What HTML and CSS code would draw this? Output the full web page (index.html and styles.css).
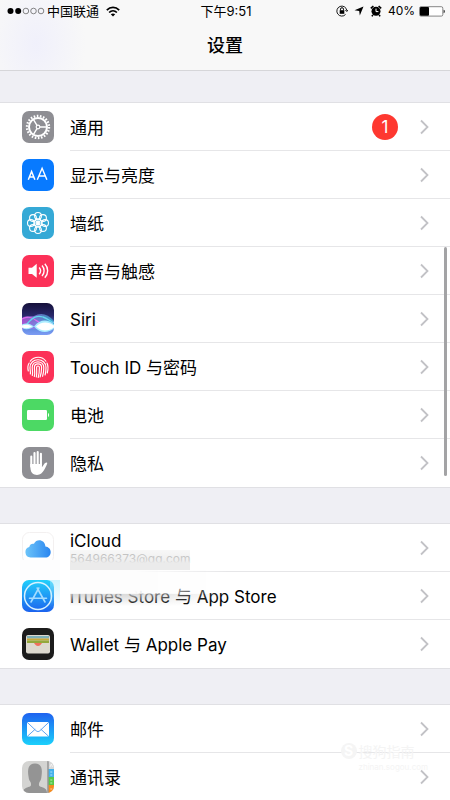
FILE: index.html
```
<!DOCTYPE html>
<html lang="zh-CN">
<head>
<meta charset="utf-8">
<meta name="viewport" content="width=device-width, initial-scale=1">
<title>设置</title>
<link rel="stylesheet" href="styles.css">
</head>
<body>
<svg class="defs" aria-hidden="true">
  <defs>
    <symbol id="chevron" viewBox="0 0 10 16"><path d="M1 1.500 7.500 8 1 14.500" fill="none" stroke="#c2c2c6" stroke-width="1.800"/></symbol>
    <linearGradient id="mailBg" x2="0" y2="1"><stop stop-color="#1f62f0"/><stop offset="1" stop-color="#1bd0fb"/></linearGradient>
    <linearGradient id="storeBg" x2="0" y2="1"><stop stop-color="#22d0fb"/><stop offset="1" stop-color="#1b62ee"/></linearGradient>
    <linearGradient id="cloudBg" x2="1" y2="0"><stop stop-color="#6cc4f9"/><stop offset="1" stop-color="#2a86f0"/></linearGradient>
    <linearGradient id="siriBg" x2="0" y2="1"><stop stop-color="#15103a"/><stop offset=".4" stop-color="#29286b"/><stop offset=".75" stop-color="#5a86dc"/><stop offset="1" stop-color="#7d9cf4"/></linearGradient>
    <linearGradient id="siriWave"><stop stop-color="#d14de0"/><stop offset=".45" stop-color="#8a8bea"/><stop offset="1" stop-color="#36c0dc"/></linearGradient>
    <clipPath id="tile"><rect width="32" height="32" rx="7"/></clipPath>
  </defs>
</svg>

<header class="top">
  <div class="status">
    <div class="carrier">
      <svg width="38" height="8" viewBox="0 0 38 8"><g fill="#000"><circle cx="3.5" cy="4" r="3"/><circle cx="11.2" cy="4" r="3"/></g><g fill="none" stroke="#555" stroke-width=".7"><circle cx="18.9" cy="4" r="2.8"/><circle cx="26.5" cy="4" r="2.8"/><circle cx="34" cy="4" r="2.8"/></g></svg>
      <span>中国联通</span>
      <svg class="wifi" width="14" height="11" viewBox="0 0 14 11"><g fill="none" stroke="#000" stroke-width="1.7"><path d="M.8 4.1C4.400.5 9.600.5 13.200 4.100"/><path d="M3.1 6.500c2.300-2.200 5.500-2.200 7.800 0"/></g><path d="M7 10.500 4.800 8.200c1.300-1.100 3.100-1.100 4.400 0z"/></svg>
    </div>
    <time>下午9:51</time>
    <div class="indicators">
      <svg width="12" height="12" viewBox="0 0 12 12"><path d="M10.800 5.500A5 5 0 1 0 9.600 9.400M9.400 5l1.400 1.500L12 5" fill="none" stroke="#000" stroke-width=".9"/><rect x="3.7" y="5.2" width="4.6" height="3.6"/><path d="M4.500 5.300V4.200a1.500 1.500 0 0 1 3 0v1.100" fill="none" stroke="#000"/></svg>
      <svg width="10" height="10" viewBox="0 0 10 10"><path d="M9.500.5 5.800 9.500 5.200 4.900.5 4.300z"/></svg>
      <svg width="12" height="12" viewBox="0 0 12 12"><circle cx="6" cy="6.3" r="4.5"/><path d="M.8 3.300 3.400 1M8.600 1l2.600 2.300M2.800 9.800 2 11.300M9.200 9.800l.8 1.500" stroke="#000" stroke-width="1.6"/><path d="M6 3.600v3h2.400" stroke="#fff" fill="none"/></svg>
      <span>40%</span>
      <svg width="26" height="11" viewBox="0 0 26 11"><rect x=".5" y=".7" width="23.3" height="9.4" rx="1.5" fill="#fff" stroke="#555" stroke-width=".7"/><rect x="1" y="1" width="9" height="8.8" rx="1"/><path d="M24.700 3.800c1.300.2 1.300 3.200 0 3.400z"/></svg>
    </div>
  </div>
  <h1>设置</h1>
</header>

<main>
  <nav class="group">
    <a class="row" href="#general">
      <svg class="icon" viewBox="0 0 32 32"><rect width="32" height="32" rx="7" fill="#8e8e93"/><g fill="none" stroke="#fff"><circle cx="16" cy="16" r="11" stroke-width="2.400" stroke-dasharray="1.600 1.542"/><circle cx="16" cy="16" r="9" stroke-width="2"/><path d="M18 16h7M15 14.300l-3.800-6.200M15 17.700l-3.800 6.200" stroke-width="1.400"/><circle cx="16" cy="16" r="1.800" stroke-width="1.200"/></g></svg>
      <span class="cell"><span class="label">通用</span><span class="badge">1</span><svg class="chevron"><use href="#chevron"/></svg></span>
    </a>
    <a class="row" href="#display">
      <svg class="icon" viewBox="0 0 32 32"><rect width="32" height="32" rx="7" fill="#087aff"/><g fill="none" stroke="#fff"><path d="m6.300 20.700 3.300-8.200 3.300 8.200M7.400 18h4.400" stroke-width="1.500"/><path d="m15.300 20.700 4.800-11.400 4.800 11.400M17 17h6.200" stroke-width="1.400"/></g></svg>
      <span class="cell"><span class="label">显示与亮度</span><svg class="chevron"><use href="#chevron"/></svg></span>
    </a>
    <a class="row" href="#wallpaper">
      <svg class="icon" viewBox="0 0 32 32"><rect width="32" height="32" rx="7" fill="#35a9d6"/><g fill="none" stroke="#fff" stroke-width="1.1"><circle cx="16" cy="8.900" r="3.400"/><circle cx="21" cy="11" r="3.400"/><circle cx="23.100" cy="16" r="3.400"/><circle cx="21" cy="21" r="3.400"/><circle cx="16" cy="23.100" r="3.400"/><circle cx="11" cy="21" r="3.400"/><circle cx="8.900" cy="16" r="3.400"/><circle cx="11" cy="11" r="3.400"/><circle cx="16" cy="16" r="4.100"/><path d="M16 12v8M12 16h8M13.200 13.200l5.600 5.600M18.800 13.200l-5.600 5.600"/></g><circle cx="16" cy="16" r="1.900" fill="#fff"/></svg>
      <span class="cell"><span class="label">墙纸</span><svg class="chevron"><use href="#chevron"/></svg></span>
    </a>
    <a class="row" href="#sounds">
      <svg class="icon" viewBox="0 0 32 32"><rect width="32" height="32" rx="7" fill="#fc3158"/><path d="M6.500 12.700H10l4.700-3.900v14L10 19H6.500z" fill="#fff"/><g fill="none" stroke="#fff" stroke-width="1.400"><path d="M17.200 12.500c1.600 1.900 1.600 4.800 0 6.700M20 10.600c2.800 3 2.800 7.400 0 10.400M22.800 8.800c3.800 4 3.800 10 0 14"/></g></svg>
      <span class="cell"><span class="label">声音与触感</span><svg class="chevron"><use href="#chevron"/></svg></span>
    </a>
    <a class="row" href="#siri">
      <svg class="icon" viewBox="0 0 32 32"><g clip-path="url(#tile)"><rect width="32" height="32" fill="url(#siriBg)"/><path d="M0 15c5-3 9-1 12-2 7-4 14-2 20 5v8H0z" fill="url(#siriWave)" opacity=".7"/><path d="M0 16c6-3 10-2 15 2s11 5 17 1" fill="none" stroke="#d96cf0" stroke-width="1.200"/><path d="M5 21c6-7 10-9 16-7 4 1 7 4 11 6" fill="none" stroke="#62d7ee" stroke-width="1.300"/><path d="M12 23.500c6-7.500 14-7.500 20-2v4c-6 5-14 5-20-2zM0 21.500c4-2 8-1 12 2-4 3-8 3.500-12 1.500z" fill="#a9ecff"/><path d="M14 23.500c5-5 12-5 18-1v2c-6 4-13 4-18-1M0 22.500c4-1.500 7-1 10 1-3 2-6 2-10 1" fill="#fff"/></g></svg>
      <span class="cell"><span class="label">Siri</span><svg class="chevron"><use href="#chevron"/></svg></span>
    </a>
    <a class="row" href="#touchid">
      <svg class="icon" viewBox="0 0 32 32"><rect width="32" height="32" rx="7" fill="#fc3158"/><g fill="none" stroke="#fff" stroke-width="1.150" stroke-linecap="round"><path d="M8.300 10.200c4-5.300 12-5.300 15.600 0M6.300 20c-.8-3.200-.5-6 .9-8M25 12c1.400 3 1.200 6.500.3 10"/><path d="M8.300 23c.5-2-.3-4-.3-6.500 0-10.300 16-10.300 16 0 0 3-.2 5-.9 7.500M10.300 24.500c.8-3-.1-5.500-.1-8 0-7.600 11.600-7.600 11.600 0 0 3-.3 6-1.200 8.800M12.300 25.500c1-3.500.1-6.200.1-9 0-4.800 7.200-4.800 7.200 0 0 3.300-.4 6.400-1.500 9.500M14.300 26c.8-3.500.3-6.500.3-9.500 0-2 2.800-2 2.800 0 0 3.500-.3 6.700-1.200 10"/></g></svg>
      <span class="cell"><span class="label">Touch ID 与密码</span><svg class="chevron"><use href="#chevron"/></svg></span>
    </a>
    <a class="row" href="#battery">
      <svg class="icon" viewBox="0 0 32 32"><rect width="32" height="32" rx="7" fill="#4cd964"/><rect x="5" y="11" width="20" height="10" rx="1.200" fill="#fff"/><path d="M26 14c1.400.2 1.400 3.800 0 4z" fill="#fff"/></svg>
      <span class="cell"><span class="label">电池</span><svg class="chevron"><use href="#chevron"/></svg></span>
    </a>
    <a class="row" href="#privacy">
      <svg class="icon" viewBox="0 0 32 32"><rect width="32" height="32" rx="7" fill="#8e8e93"/><g stroke="#fff" stroke-width="2.100" stroke-linecap="round"><path d="M9.300 9.500v10M12.500 6v12M15.700 5v13M18.900 6.800V18"/></g><path d="M8.250 17h11.700v3.200c1.700-1.700 2.500-4.700 4.600-4.600 1.300.2.600 1.200.1 2.400-1.600 3.400-3 6.500-5.400 8.600-2.400 2-6.800 1.800-8.900-.3C8.500 24.500 8.250 21 8.250 17z" fill="#fff"/></svg>
      <span class="cell"><span class="label">隐私</span><svg class="chevron"><use href="#chevron"/></svg></span>
    </a>
  </nav>

  <nav class="group">
    <a class="row" href="#icloud">
      <svg class="icon" viewBox="0 0 32 32"><rect x=".5" y=".5" width="31" height="31" rx="7" fill="#fff" stroke="#f3f0f0"/><path d="M8.500 25.500a5.300 5.300 0 0 1-1.200-10.400c.3-2.800 2.700-3.900 4.700-3.300 2.500-5.700 11-4.300 11.400 2.600 3.100.3 5.300 2.700 5.300 5.500 0 3.100-2.300 5.600-5.300 5.600z" fill="url(#cloudBg)"/></svg>
      <span class="cell"><span class="label two-line">iCloud<small>564966373@qq.com</small></span><svg class="chevron"><use href="#chevron"/></svg></span>
    </a>
    <a class="row" href="#stores">
      <svg class="icon" viewBox="0 0 32 32"><rect width="32" height="32" rx="7" fill="url(#storeBg)"/><circle cx="16" cy="16" r="13.500" fill="none" stroke="#d7f2ff" stroke-width="1.500"/><path d="m9 22 7.800-14M15.200 8 23 22M7.500 18.300h17" fill="none" stroke="#a4dcff" stroke-width="1.600" stroke-linecap="round"/></svg>
      <span class="cell"><span class="label">iTunes Store 与 App Store</span><svg class="chevron"><use href="#chevron"/></svg></span>
    </a>
    <a class="row" href="#wallet">
      <svg class="icon" viewBox="0 0 32 32"><rect width="32" height="32" rx="7" fill="#1c1c1c"/><rect x="4" y="7" width="24" height="18.500" rx="2" fill="#ddd9cf"/><path d="M5 8h22v2.500H5z" fill="#7fb0b8"/><path d="M5 10.500h22v2H5z" fill="#c9a93a"/><path d="M5 12.500h22v2.500H5z" fill="#93a83c"/><path d="M12 15h8c-1 1.500-2 3-4 3s-3-1.500-4-3z" fill="#ef6f5d"/></svg>
      <span class="cell"><span class="label">Wallet 与 Apple Pay</span><svg class="chevron"><use href="#chevron"/></svg></span>
    </a>
    <span class="smudge smudge-mail"></span>
    <span class="smudge smudge-icon"></span>
    <span class="smudge smudge-edge"></span>
    <span class="smudge smudge-store"></span>
  </nav>

  <nav class="group">
    <a class="row" href="#mail">
      <svg class="icon" viewBox="0 0 32 32"><rect width="32" height="32" rx="7" fill="url(#mailBg)"/><rect x="5" y="9" width="22" height="14.500" rx="1.500" fill="#fff"/><path d="m5.500 9.600 8.700 8.200c1.200 1 2.400 1 3.600 0l8.700-8.200M5.700 23l7.500-6.800M26.300 23l-7.500-6.800" fill="none" stroke="#4c98ee" stroke-width=".9"/></svg>
      <span class="cell"><span class="label">邮件</span><svg class="chevron"><use href="#chevron"/></svg></span>
    </a>
    <a class="row" href="#contacts">
      <svg class="icon" viewBox="0 0 32 32"><g clip-path="url(#tile)"><rect width="32" height="32" fill="#d4d4d2"/><path d="M26 0h6v8h-6z" fill="#d8d8d8"/><path d="M26.500 8H32v8h-5.500z" fill="#44b1ec"/><path d="M26.500 16H32v8h-5.500z" fill="#56c94b"/><path d="M26.500 24H32v8h-5.500z" fill="#f68b1f"/><path d="M26 0v32" stroke="#777"/><path d="m28 6 1.300-3 1.300 3M28.300 11h2M28.300 14h2M28.300 19h2M28.300 22h2M28.300 28h2" stroke="#fff" stroke-opacity=".6" fill="none"/><path d="M1 32c.2-4.500 2.500-5 7-6.500 1.500-.5 1.200-3 .5-4.500-1.400-1.700-1.700-3.500-1.900-5C5.200 8 6.400 2.500 13 2.500S20.800 8 19.400 16c-.2 1.500-.5 3.300-1.900 5-.7 1.500-1 4 .5 4.500 4.500 1.500 6.800 2 7 6.500z" fill="#949494"/></g></svg>
      <span class="cell"><span class="label">通讯录</span><svg class="chevron"><use href="#chevron"/></svg></span>
    </a>
    <div class="watermark"><b>S</b><span>搜狗指南<small>zhinan.sogou.com</small></span></div>
  </nav>
</main>
<span class="scroll-thumb"></span>
</body>
</html>
```
FILE: styles.css
```
* { box-sizing: border-box; }

html { scrollbar-width: none; }

body {
  position: relative;
  margin: 0;
  min-height: 100vh;
  background: #efeff4;
  color: #000;
  font-family: Inter, "Noto Sans CJK SC", sans-serif;
  font-size: 17px;
}

.defs { position: absolute; width: 0; height: 0; }

.top {
  background: radial-gradient(ellipse 50px 70px at 36px 44px, #f0f0fb, transparent), #f8f8f8;
  box-shadow: 0 1px #d6d6d9;
}

.status {
  display: grid;
  grid-template-columns: 1fr auto 1fr;
  align-items: center;
  height: 22px;
  padding: 0 5px 0 7px;
  font-size: 13px;
  line-height: 22px;
}

.carrier, .indicators { display: flex; align-items: center; }
.carrier { gap: 2px; }
.wifi { margin-left: 5px; }
.indicators { justify-content: flex-end; gap: 6px; font-size: 12px; }
.indicators span { margin-right: -2px; }

h1 {
  margin: 0;
  height: 48px;
  text-align: center;
  font-size: 18px;
  font-weight: 500;
  line-height: 48px;
}

.group {
  position: relative;
  margin-top: 37px;
  background: #fff;
  box-shadow: 0 -1px #e0e0e4, 0 1px #e0e0e4;
}
.group:first-child { margin-top: 33px; }

.row {
  display: flex;
  align-items: center;
  height: 48px;
  padding-left: 22px;
  color: inherit;
  text-decoration: none;
}

.icon { flex: none; width: 32px; height: 32px; margin-right: 16px; }

.cell {
  display: flex;
  flex: 1;
  align-items: center;
  align-self: stretch;
  padding-right: 20px;
  border-bottom: 1px solid #e6e6e8;
}
.row:nth-last-of-type(1) .cell { border-bottom: 0; }

.label { flex: 1; padding-top: 2px; line-height: 24px; }
.chevron { width: 10px; height: 16px; }

.badge {
  width: 26px;
  height: 26px;
  margin-right: 22px;
  border-radius: 50%;
  background: #fe3830;
  color: #fff;
  line-height: 26px;
  text-align: center;
}

.two-line { line-height: 20px; }
.two-line small {
  display: block;
  color: #999;
  font-size: 12px;
  line-height: 16px;
}

.smudge { position: absolute; pointer-events: none; }
.smudge-mail {
  top: 26px;
  left: 70px;
  width: 120px;
  height: 20px;
  background: linear-gradient(#ececec66, #e8e8e8aa 50%, #ebebeb 65%);
}
.smudge-icon {
  top: 36px;
  left: 20px;
  width: 40px;
  height: 20px;
  background: #fdfdfe;
}
.smudge-edge {
  top: 56px;
  left: 50px;
  width: 10px;
  height: 28px;
  background: linear-gradient(#a5e9fd88, #ffffff00);
}
.smudge-store {
  top: 46px;
  left: 70px;
  width: 160px;
  height: 36px;
  background: linear-gradient(#fdfdfd 65%, #d0d0d0cc 67%, #ffffff00);
  -webkit-mask-image: linear-gradient(90deg, #000 40%, transparent);
  mask-image: linear-gradient(90deg, #000 40%, transparent);
}

.watermark {
  position: absolute;
  top: 38px;
  right: 22px;
  display: flex;
  gap: 2px;
  color: #f4f4f4;
  font-size: 14px;
  line-height: 18px;
  pointer-events: none;
}
.watermark b {
  width: 16px;
  height: 16px;
  border-radius: 50%;
  background: #f5f5f5;
  color: #fff;
  line-height: 16px;
  text-align: center;
}
.watermark small { display: block; font-size: 8px; line-height: 12px; }

.scroll-thumb {
  position: absolute;
  top: 247px;
  right: 3px;
  width: 3px;
  height: 229px;
  border-radius: 2px;
  background: #a3a3a5;
}
```
